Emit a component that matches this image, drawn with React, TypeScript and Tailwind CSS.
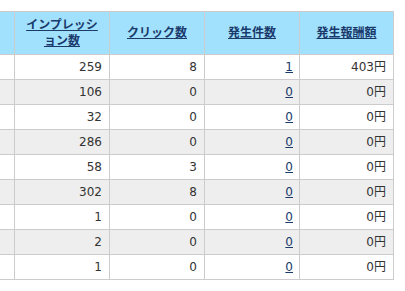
import React from "react";

const rows: [string, string, string, string][] = [
  ["259", "8", "1", "403円"],
  ["106", "0", "0", "0円"],
  ["32", "0", "0", "0円"],
  ["286", "0", "0", "0円"],
  ["58", "3", "0", "0円"],
  ["302", "8", "0", "0円"],
  ["1", "0", "0", "0円"],
  ["2", "0", "0", "0円"],
  ["1", "0", "0", "0円"],
];

const font = { fontFamily: '"DejaVu Sans", "Noto Sans CJK JP", sans-serif' };

export default function App() {
  return (
    <div className="w-[405px] h-[291px] bg-white overflow-hidden" style={font}>
      <div className="mt-[11px] w-[394px] grid grid-cols-[14px_94px_94px_94px_93px] gap-px bg-[#cccccc] border-t border-r border-b border-[#cccccc]">
        <div className="h-[42px] bg-[#a1e1fd]" />
        <div className="h-[42px] bg-[#a1e1fd] flex items-center justify-center px-[6px] text-center">
          <span className="text-[12px] leading-[16px] font-bold text-[#1a3a6c] underline">
            インプレッション数
          </span>
        </div>
        <div className="h-[42px] bg-[#a1e1fd] flex items-center justify-center text-center">
          <span className="text-[12px] leading-[16px] font-bold text-[#1a3a6c] underline">クリック数</span>
        </div>
        <div className="h-[42px] bg-[#a1e1fd] flex items-center justify-center text-center">
          <span className="text-[12px] leading-[16px] font-bold text-[#1a3a6c] underline">発生件数</span>
        </div>
        <div className="h-[42px] bg-[#a1e1fd] flex items-center justify-center text-center">
          <span className="text-[12px] leading-[16px] font-bold text-[#1a3a6c] underline">発生報酬額</span>
        </div>
        {rows.map((r, i) => {
          const bg = i % 2 === 0 ? "bg-white" : "bg-[#eeeeee]";
          return (
            <React.Fragment key={i}>
              <div className={`h-[24px] ${bg}`} />
              <div className={`h-[24px] ${bg} flex items-center justify-end pr-[7px] text-[12px] text-[#333333]`}>{r[0]}</div>
              <div className={`h-[24px] ${bg} flex items-center justify-end pr-[7px] text-[12px] text-[#333333]`}>{r[1]}</div>
              <div className={`h-[24px] ${bg} flex items-center justify-end pr-[6px] text-[12px]`}>
                <span className="text-[#1a3a6c] underline">{r[2]}</span>
              </div>
              <div className={`h-[24px] ${bg} flex items-center justify-end pr-[7px] text-[12px] text-[#333333]`}>{r[3]}</div>
            </React.Fragment>
          );
        })}
      </div>
    </div>
  );
}
